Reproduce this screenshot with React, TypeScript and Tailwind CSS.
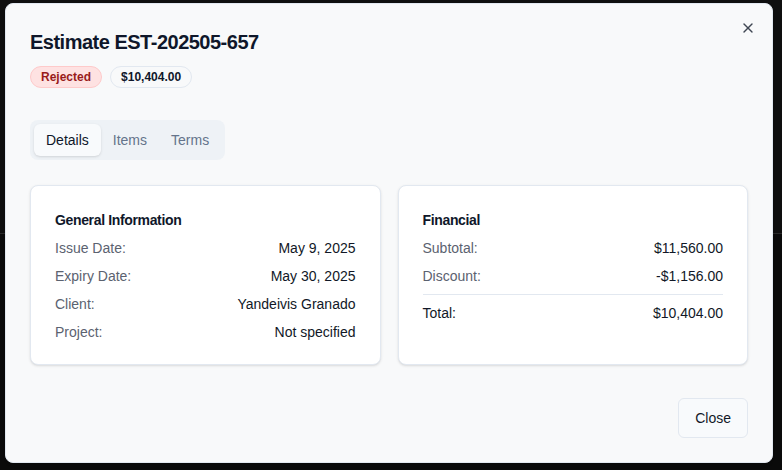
import { X } from "lucide-react";

const general = [
  ["Issue Date:", "May 9, 2025"],
  ["Expiry Date:", "May 30, 2025"],
  ["Client:", "Yandeivis Granado"],
  ["Project:", "Not specified"],
];

function Row({ label, value, strong }: { label: string; value: string; strong?: boolean }) {
  return (
    <div className="flex items-center justify-between text-sm leading-5">
      <span className={strong ? "text-[#111827]" : "text-[#5b6270]"}>{label}</span>
      <span className="text-[#111827]">{value}</span>
    </div>
  );
}

export default function App() {
  return (
    <div className="relative h-[470px] w-[782px] overflow-hidden bg-[#0b0b0b] font-['Liberation_Sans',Arial,sans-serif]">
      {/* page behind the overlay */}
      <div className="h-[233px] bg-[#0f0f0f]" />
      <div className="h-px bg-[#2a2a2a]" />

      <div
        role="dialog"
        className="absolute left-[5px] top-[3px] flex h-[460px] w-[768px] flex-col rounded-lg border border-[#e2e8f0] bg-[#f8f9fa] p-6 shadow-lg"
      >
        <button className="absolute right-4 top-4 text-[#3f4652]">
          <X size={16} strokeWidth={2} />
        </button>

        <h2 className="text-xl leading-7 font-bold tracking-tight text-[#0f172a]">
          Estimate EST-202505-657
        </h2>

        <div className="mt-2.5 flex gap-2">
          <span className="rounded-full border border-[#fecaca] bg-[#fee2e2] px-2.5 py-0.5 text-xs leading-4 font-bold text-[#991b1b]">
            Rejected
          </span>
          <span className="rounded-full border border-[#e2e8f0] px-2.5 py-0.5 text-xs leading-4 font-bold text-[#0f172a]">
            $10,404.00
          </span>
        </div>

        <div className="mt-8 flex h-10 items-center self-start rounded-lg bg-[#eef2f6] p-1 text-sm">
          <button className="h-8 rounded-md bg-[#f8fafc] px-3 text-[#0f172a] shadow-sm">Details</button>
          <button className="h-8 px-3 text-[#64748b]">Items</button>
          <button className="h-8 px-3 text-[#64748b]">Terms</button>
        </div>

        <div className="mt-[25px] grid grid-cols-2 gap-[17px]">
          <div className="flex flex-col gap-2 rounded-lg border border-[#e2e8f0] bg-white p-6 pb-[22px] shadow-sm">
            <h3 className="text-sm leading-5 font-bold tracking-tight text-[#0f172a]">General Information</h3>
            {general.map(([l, v]) => (
              <Row key={l} label={l} value={v} />
            ))}
          </div>

          <div className="flex flex-col gap-2 rounded-lg border border-[#e2e8f0] bg-white p-6 pb-[22px] shadow-sm">
            <h3 className="text-sm leading-5 font-bold tracking-tight text-[#0f172a]">Financial</h3>
            <Row label="Subtotal:" value="$11,560.00" />
            <Row label="Discount:" value="-$1,156.00" />
            <div className="border-t border-[#e2e8f0] pt-2">
              <Row label="Total:" value="$10,404.00" strong />
            </div>
          </div>
        </div>

        <div className="mt-auto flex justify-end">
          <button className="h-10 rounded-md border border-[#e2e8f0] bg-[#f8fafc] px-4 text-sm text-[#111827]">
            Close
          </button>
        </div>
      </div>
    </div>
  );
}
